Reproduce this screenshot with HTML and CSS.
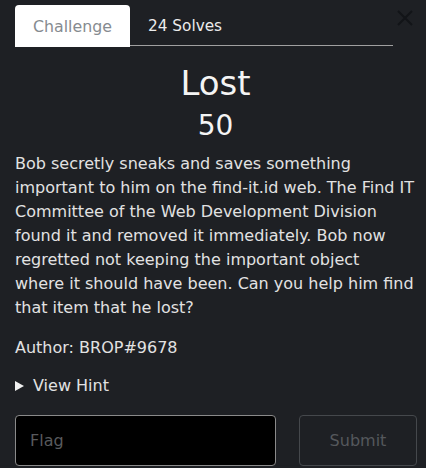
FILE: index.html
```html
<!DOCTYPE html>
<html>
<head>
<meta charset="utf-8">
<link rel="stylesheet" href="styles.css">
</head>
<body>
<div class="modal">
  <div class="header">
    <ul class="tabs">
      <li class="tab active">Challenge</li>
      <li class="tab">24 Solves</li>
    </ul>
    <button class="close" aria-label="Close">
      <svg width="16" height="16" viewBox="0 0 16 16"><path d="M1 1L15 15M15 1L1 15" stroke="currentColor" stroke-width="2" fill="none"/></svg>
    </button>
  </div>
  <h2 class="title">Lost</h2>
  <h3 class="points">50</h3>
  <p class="desc">Bob secretly sneaks and saves something<br>important to him on the find-it.id web. The Find IT<br>Committee of the Web Development Division<br>found it and removed it immediately. Bob now<br>regretted not keeping the important object<br>where it should have been. Can you help him find<br>that item that he lost?</p>
  <p class="author">Author: BROP#9678</p>
  <div class="hint"><span class="caret"></span>View Hint</div>
  <div class="submit-row">
    <input class="flag" type="text" placeholder="Flag">
    <button class="submit">Submit</button>
  </div>
</div>
</body>
</html>
```

FILE: styles.css
```css
html, body {
  margin: 0;
  padding: 0;
  background: #1e2024;
}
body {
  font-family: "DejaVu Sans", sans-serif;
  color: #e6e6e6;
  width: 426px;
  height: 468px;
  overflow: hidden;
}
.modal {
  padding: 5px 10px 0 15px;
}
.header {
  display: flex;
  align-items: flex-start;
}
.tabs {
  list-style: none;
  margin: 0;
  padding: 0;
  display: flex;
  width: 378px;
  height: 40px;
  border-bottom: 1px solid #a0a0a0;
}
.tab {
  height: 40px;
  line-height: 43px;
  font-size: 15.3px;
  padding: 0 17px 0 18px;
  color: #ececec;
  box-sizing: border-box;
}
.tab.active {
  background: #ffffff;
  color: #868b90;
  border-radius: 4px 4px 0 0;
  height: 42px;
  width: 115px;
  text-align: center;
  font-size: 15.8px;
  padding: 0;
}
.close {
  margin: 5px 0 0 4px;
  padding: 0;
  border: 0;
  background: none;
  color: #121418;
  width: 16px;
  height: 16px;
  display: block;
}
.close svg { display: block; }
.title {
  margin: 19px 0 0;
  text-align: center;
  font-size: 34px;
  font-weight: 500;
  line-height: 36px;
  color: #f4f4f4;
}
.points {
  margin: 9px 0 0;
  text-align: center;
  font-size: 28px;
  font-weight: 500;
  line-height: 32px;
  color: #f4f4f4;
}
.desc {
  margin: 10px 0 0;
  font-size: 16px;
  line-height: 24px;
  color: #e2e2e2;
  white-space: nowrap;
}
.author {
  margin: 16px 0 0;
  font-size: 16px;
  line-height: 24px;
  color: #e2e2e2;
}
.hint {
  margin-top: 14px;
  font-size: 16px;
  line-height: 24px;
  color: #e2e2e2;
  display: flex;
  align-items: center;
}
.caret {
  width: 0;
  height: 0;
  border-left: 9px solid #f0f0f0;
  border-top: 5px solid transparent;
  border-bottom: 5px solid transparent;
  margin-right: 9px;
}
.submit-row {
  display: flex;
  justify-content: space-between;
  margin-top: 17px;
}
.flag {
  box-sizing: border-box;
  width: 261px;
  height: 51px;
  background: #000;
  border: 1px solid #8a8a8a;
  border-radius: 4px;
  padding: 0 14px;
  font-family: "DejaVu Sans", sans-serif;
  font-size: 16px;
  color: #e2e2e2;
  outline: none;
}
.flag::placeholder { color: #585a5d; }
.submit {
  box-sizing: border-box;
  width: 118px;
  height: 51px;
  background: transparent;
  border: 1px solid #45484c;
  border-radius: 4px;
  font-family: "DejaVu Sans", sans-serif;
  font-size: 16px;
  color: #55585c;
  margin-right: -1px;
}
```
